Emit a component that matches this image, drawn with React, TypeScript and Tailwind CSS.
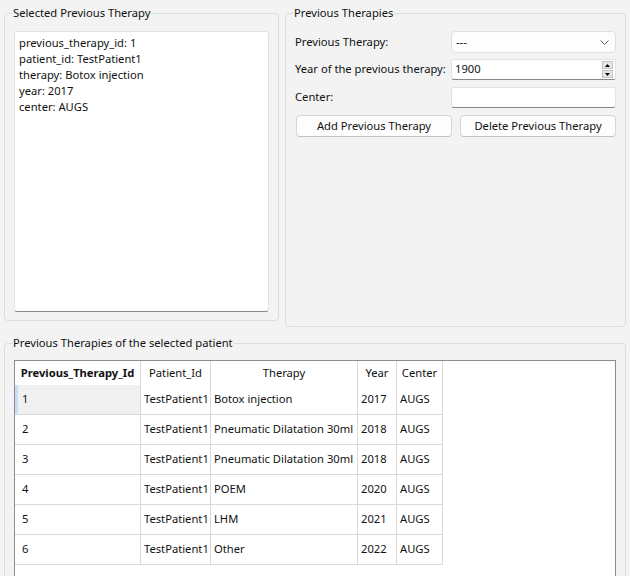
import React from 'react';

const rows = [
  { id: '1', patient: 'TestPatient1', therapy: 'Botox injection', year: '2017', center: 'AUGS' },
  { id: '2', patient: 'TestPatient1', therapy: 'Pneumatic Dilatation 30ml', year: '2018', center: 'AUGS' },
  { id: '3', patient: 'TestPatient1', therapy: 'Pneumatic Dilatation 30ml', year: '2018', center: 'AUGS' },
  { id: '4', patient: 'TestPatient1', therapy: 'POEM', year: '2020', center: 'AUGS' },
  { id: '5', patient: 'TestPatient1', therapy: 'LHM', year: '2021', center: 'AUGS' },
  { id: '6', patient: 'TestPatient1', therapy: 'Other', year: '2022', center: 'AUGS' },
];

function GroupBox({ title, className, children }: { title: string; className?: string; children: React.ReactNode }) {
  return (
    <fieldset className={`border border-[#dcdcdc] rounded-[4px] ${className ?? ''}`}>
      <legend className="ml-[7px] px-[1px] leading-[16px] whitespace-nowrap">{title}</legend>
      {children}
    </fieldset>
  );
}

function Chevron() {
  return (
    <svg width="9" height="5" viewBox="0 0 9 5" className="mr-[6px]">
      <path d="M0.5 0.5 L4.5 4.5 L8.5 0.5" fill="none" stroke="#606060" strokeWidth="1" />
    </svg>
  );
}

function SpinArrows() {
  return (
    <div className="flex flex-col gap-[1px] mr-[2px]">
      <div className="w-[11px] h-[8px] bg-[#e6e6e6] border border-[#c4c4c4] flex items-center justify-center">
        <svg width="5" height="3" viewBox="0 0 5 3">
          <path d="M0 3 L2.5 0 L5 3 Z" fill="#000" />
        </svg>
      </div>
      <div className="w-[11px] h-[8px] bg-[#e6e6e6] border border-[#c4c4c4] flex items-center justify-center">
        <svg width="5" height="3" viewBox="0 0 5 3">
          <path d="M0 0 L5 0 L2.5 3 Z" fill="#000" />
        </svg>
      </div>
    </div>
  );
}

export default function App() {
  const cols = ['w-[126px]', 'w-[70px]', 'w-[147px]', 'w-[39px]', 'w-[46px]'];

  return (
    <div
      className="w-[630px] h-[576px] overflow-hidden bg-[#f3f3f3] text-[#111] text-[11.2px] pt-[5px] px-[4px]"
      style={{ fontFamily: '"Noto Sans", "Segoe UI", sans-serif' }}
    >
      <div className="flex items-start gap-[6px]">
        {/* Selected Previous Therapy */}
        <GroupBox title="Selected Previous Therapy" className="w-[275px] h-[316px]">
          <div className="mt-[10px] mx-[9px] h-[281px] bg-white border border-[#e3e3e3] border-b-[#8a8a8a] rounded-[3px] pt-[3px] px-[4px] leading-[16px]">
            <div>previous_therapy_id: 1</div>
            <div>patient_id: TestPatient1</div>
            <div>therapy: Botox injection</div>
            <div>year: 2017</div>
            <div>center: AUGS</div>
          </div>
        </GroupBox>

        {/* Previous Therapies */}
        <GroupBox title="Previous Therapies" className="w-[341px] h-[322px]">
          <div className="pl-[9px] pr-[9px]">
            <div className="mt-[10px] flex items-center">
              <div className="w-[156px] whitespace-nowrap">Previous Therapy:</div>
              <div className="flex-1 h-[22px] bg-[#fdfdfd] border border-[#e0e0e0] rounded-[4px] flex items-center justify-between pl-[4px]">
                <span>---</span>
                <Chevron />
              </div>
            </div>
            <div className="mt-[6px] flex items-center">
              <div className="w-[156px] whitespace-nowrap">Year of the previous therapy:</div>
              <div className="flex-1 h-[21px] bg-white border border-[#e3e3e3] border-b-[#868686] rounded-[3px] flex items-center justify-between pl-[3px]">
                <span>1900</span>
                <SpinArrows />
              </div>
            </div>
            <div className="mt-[7px] flex items-center">
              <div className="w-[156px] whitespace-nowrap">Center:</div>
              <div className="flex-1 h-[21px] bg-white border border-[#e3e3e3] border-b-[#868686] rounded-[3px]" />
            </div>
            <div className="mt-[7px] pl-[1px] flex gap-[8px]">
              <button className="flex-1 h-[22px] bg-[#fdfdfd] border border-[#d6d6d6] border-b-[#c2c2c2] rounded-[4px] text-[11.2px]">
                Add Previous Therapy
              </button>
              <button className="flex-1 h-[22px] bg-[#fdfdfd] border border-[#d6d6d6] border-b-[#c2c2c2] rounded-[4px] text-[11.2px]">
                Delete Previous Therapy
              </button>
            </div>
          </div>
        </GroupBox>
      </div>

      {/* Previous Therapies of the selected patient */}
      <GroupBox title="Previous Therapies of the selected patient" className="mt-[8px] w-[622px] h-[300px]">
        <div className="mt-[9px] mx-[9px] h-[240px] bg-white border border-[#8c8c8c]">
          <div className="flex h-[24px]">
            <div className={`${cols[0]} border-r border-[#d9d9d9] flex items-center justify-center font-bold`}>
              Previous_Therapy_Id
            </div>
            <div className={`${cols[1]} border-r border-[#d9d9d9] flex items-center justify-center`}>Patient_Id</div>
            <div className={`${cols[2]} border-r border-[#d9d9d9] flex items-center justify-center`}>Therapy</div>
            <div className={`${cols[3]} border-r border-[#d9d9d9] flex items-center justify-center`}>Year</div>
            <div className={`${cols[4]} border-r border-[#d9d9d9] flex items-center justify-center`}>Center</div>
          </div>
          {rows.map((r, i) => (
            <div key={r.id} className="flex h-[30px]">
              <div
                className={`${cols[0]} border-r border-b border-[#d9d9d9] flex items-center ${
                  i === 0 ? 'bg-[#f0f0f0] border-l-[3px] border-l-[#c9def5] pl-[4px]' : 'pl-[7px]'
                }`}
              >
                {r.id}
              </div>
              <div className={`${cols[1]} border-r border-b border-[#d9d9d9] flex items-center pl-[3px] whitespace-nowrap`}>
                {r.patient}
              </div>
              <div className={`${cols[2]} border-r border-b border-[#d9d9d9] flex items-center pl-[3px] whitespace-nowrap`}>
                {r.therapy}
              </div>
              <div className={`${cols[3]} border-r border-b border-[#d9d9d9] flex items-center pl-[3px]`}>{r.year}</div>
              <div className={`${cols[4]} border-r border-b border-[#d9d9d9] flex items-center pl-[3px]`}>{r.center}</div>
            </div>
          ))}
        </div>
      </GroupBox>
    </div>
  );
}
